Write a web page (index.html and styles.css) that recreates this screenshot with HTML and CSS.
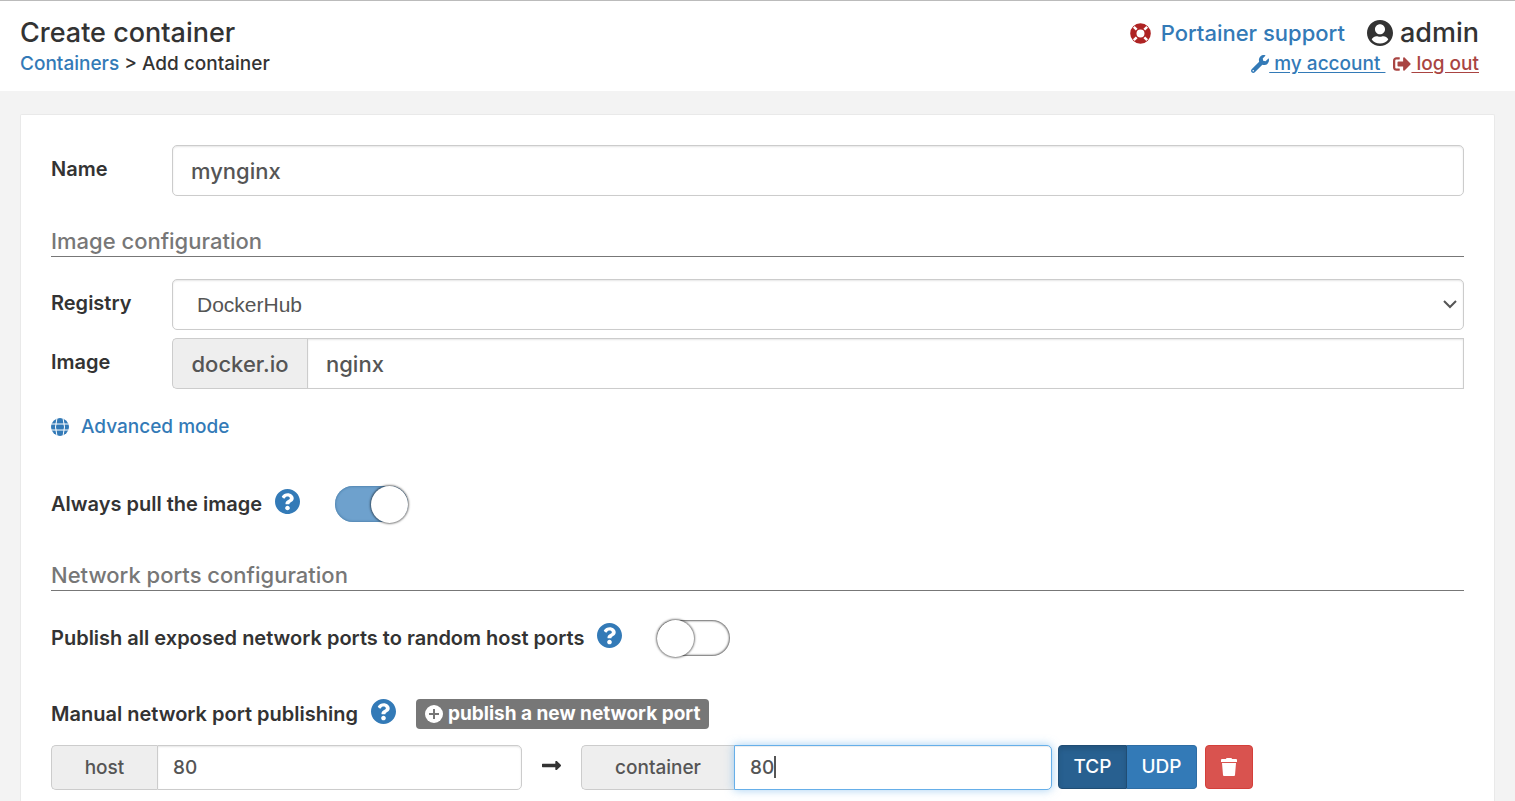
FILE: index.html
```html
<!DOCTYPE html>
<html lang="en">

<head>
    <meta charset="UTF-8">
    <meta name="viewport" content="width=device-width, initial-scale=1.0">
    <title>Create container</title>
    <link rel="stylesheet" href="styles.css">
</head>

<body>
    <!-- shared icons -->
    <svg class="sprite" aria-hidden="true">
        <symbol id="question" viewBox="8 8 496 496">
            <path d="M504 256c0 136.997-111.043 248-248 248S8 392.997 8 256C8 119.083 119.043 8 256 8s248 111.083 248 248zM262.655 90c-54.497 0-89.255 22.957-116.549 63.758-3.536 5.286-2.353 12.415 2.715 16.258l34.699 26.31c5.205 3.947 12.621 3.008 16.665-2.122 17.864-22.658 30.113-35.797 57.303-35.797 20.429 0 45.698 13.148 45.698 32.958 0 14.976-12.363 22.667-32.534 33.976C247.128 238.528 216 254.941 216 296v4c0 6.627 5.373 12 12 12h56c6.627 0 12-5.373 12-12v-1.333c0-28.462 83.186-29.647 83.186-106.667 0-58.002-60.165-102-116.531-102zM256 338c-25.365 0-46 20.635-46 46 0 25.364 20.635 46 46 46s46-20.636 46-46c0-25.365-20.635-46-46-46z"/>
        </symbol>
    </svg>

    <header class="header">
        <div>
            <h1 class="title">Create container</h1>
            <nav class="crumbs"><a href="#">Containers</a> &gt; Add container</nav>
        </div>
        <div class="user">
            <div class="user-top">
                <a href="#" class="support">
                    <svg class="ico-ring" viewBox="0 0 22 22" aria-hidden="true">
                        <circle cx="11" cy="11" r="7.500" fill="none" stroke="#ae2323" stroke-width="6.600"/>
                        <path d="M4 4l3 3M18 4l-3 3M4 18l3-3M18 18l-3-3" stroke="#fff" stroke-width="2.600"/>
                    </svg>
                    Portainer support
                </a>
                <span class="username">
                    <svg class="ico-user" viewBox="0 8 496 496" aria-hidden="true">
                        <path d="M248 8C111 8 0 119 0 256s111 248 248 248 248-111 248-248S385 8 248 8zm0 80c53 0 96 43 96 96s-43 96-96 96-96-43-96-96 43-96 96-96zm0 368c-66 0-123-30-158-78 12-38 50-62 94-62 20 0 34 10 64 10s44-10 64-10c44 0 82 24 94 62-35 48-92 78-158 78z"/>
                    </svg>
                    admin
                </span>
            </div>
            <div class="user-links">
                <a href="#"><svg class="ico-link" viewBox="0 0 512 512" aria-hidden="true"><path d="M507.730 109.100c-2.240-9.030-13.540-12.090-20.120-5.510l-74.360 74.360-67.880-11.310-11.310-67.880 74.360-74.360c6.620-6.620 3.430-17.900-5.660-20.160-47.380-11.740-99.550.910-136.580 37.930-39.640 39.640-50.550 97.100-34.050 147.200L18.740 402.760c-24.990 24.990-24.990 65.510 0 90.500 24.990 24.990 65.510 24.990 90.500 0l213.210-213.210c50.120 16.710 107.470 5.680 147.370-34.220 37.070-37.070 49.700-89.320 37.910-136.730zM64 472c-13.250 0-24-10.750-24-24s10.750-24 24-24 24 10.750 24 24-10.750 24-24 24z"/></svg><u>&nbsp;my account&nbsp;</u></a>
                <a href="#" class="logout"><svg class="ico-link" viewBox="0 0 512 512" aria-hidden="true"><path d="M497 273L329 441c-15 15-41 4.500-41-17v-96H152c-13.300 0-24-10.700-24-24v-96c0-13.300 10.700-24 24-24h136V88c0-21.400 25.900-32 41-17l168 168c9.300 9.400 9.300 24.600 0 34zM192 436v-40c0-6.600-5.400-12-12-12H96c-17.700 0-32-14.300-32-32V160c0-17.700 14.300-32 32-32h84c6.600 0 12-5.400 12-12V76c0-6.600-5.400-12-12-12H96c-53 0-96 43-96 96v192c0 53 43 96 96 96h84c6.600 0 12-5.400 12-12z"/></svg><u>&nbsp;log out</u></a>
            </div>
        </div>
    </header>

    <main class="panel">
        <form>
            <div class="row name-row">
                <label for="name">Name</label>
                <input type="text" id="name" class="field" value="mynginx">
            </div>

            <h2 class="section">Image configuration</h2>
            <div class="row">
                <label for="registry">Registry</label>
                <div class="select">
                    <select id="registry" class="field">
                        <option>DockerHub</option>
                    </select>
                    <svg viewBox="0 0 14 9" aria-hidden="true"><path d="M1 1l6 6 6-6"/></svg>
                </div>
            </div>
            <div class="row">
                <label for="image">Image</label>
                <div class="group image-group">
                    <span class="addon">docker.io</span>
                    <input type="text" id="image" class="field" value="nginx">
                </div>
            </div>
            <a href="#" class="advanced">
                <svg viewBox="0 0 18 18" aria-hidden="true">
                    <circle cx="9" cy="9" r="9"/>
                    <path d="M0 6h18M0 12h18M6 0q-3 9 0 18M12 0q3 9 0 18"/>
                </svg>
                Advanced mode
            </a>

            <div class="option">
                <label for="pull">Always pull the image</label>
                <svg class="help"><use href="#question"/></svg>
                <input type="checkbox" id="pull" class="switch" checked>
            </div>

            <h2 class="section">Network ports configuration</h2>
            <div class="option">
                <label for="publish">Publish all exposed network ports to random host ports</label>
                <svg class="help"><use href="#question"/></svg>
                <input type="checkbox" id="publish" class="switch">
            </div>

            <div class="manual">
                <span class="manual-label">Manual network port publishing</span>
                <svg class="help"><use href="#question"/></svg>
                <button type="button" class="badge">
                    <svg viewBox="0 0 18 18" aria-hidden="true">
                        <circle cx="9" cy="9" r="9" fill="#fff"/>
                        <path d="M9 4v10M4 9h10" stroke="#777" stroke-width="2"/>
                    </svg>
                    publish a new network port
                </button>
            </div>

            <!-- port mapping -->
            <div class="ports">
                <div class="group port">
                    <label class="addon host" for="host">host</label>
                    <input type="text" id="host" class="field" value="80">
                </div>
                <div class="arrow">
                    <svg viewBox="0 150 448 212" aria-hidden="true"><path d="M313.941 216H12c-6.627 0-12 5.373-12 12v56c0 6.627 5.373 12 12 12h301.941v46.059c0 21.382 25.851 32.090 40.971 16.971l86.059-86.059c9.373-9.373 9.373-24.569 0-33.941l-86.059-86.059c-15.119-15.119-40.971-4.411-40.971 16.971V216z"/></svg>
                </div>
                <div class="group port">
                    <label class="addon container" for="container">container</label>
                    <input type="text" id="container" class="field active" value="80">
                    <span class="caret"></span>
                </div>
                <div class="proto">
                    <button type="button" class="btn on">TCP</button>
                    <button type="button" class="btn">UDP</button>
                </div>
                <button type="button" class="remove" aria-label="Remove port">
                    <svg viewBox="0 0 16 18" aria-hidden="true"><path d="M5 1q0-1 1-1h4q1 0 1 1h4q1 0 1 1v2H0V2q0-1 1-1zM1 5h14l-1 12q0 1-1 1H3q-1 0-1-1z"/></svg>
                </button>
            </div>
        </form>
    </main>
</body>

</html>
```

FILE: styles.css
```css
* {
    box-sizing: border-box;
}

body {
    display: flex;
    flex-direction: column;
    min-height: 100vh;
    margin: 0;
    background: #f3f3f3;
    border-top: 1px solid #bbb;
    color: #333;
    font: 500 19px/26px Inter, "Open Sans", sans-serif;
}

a {
    color: #337ab7;
    text-decoration: none;
}

input,
select,
button {
    margin: 0;
    font: inherit;
}

.sprite {
    position: absolute;
    width: 0;
    height: 0;
}

/* header */
.header {
    display: flex;
    justify-content: space-between;
    height: 90px;
    padding: 16px 36px 0 20px;
    background: #fff;
}

.title {
    margin: 0;
    font-size: 27px;
    font-weight: 500;
    line-height: 32px;
}

.crumbs {
    line-height: 30px;
}

.user-top,
.user-links {
    display: flex;
    justify-content: flex-end;
    align-items: center;
}

.user-top {
    gap: 22px;
    height: 32px;
}

.support,
.username {
    display: flex;
    align-items: center;
}

.support {
    gap: 10px;
    font-size: 22px;
}

.username {
    gap: 7px;
    font-size: 27px;
}

.ico-ring {
    width: 21px;
    height: 21px;
}

.ico-user {
    width: 26px;
    height: 26px;
    fill: #333;
}

.user-links {
    gap: 8px;
    line-height: 30px;
}

.user-links a {
    display: flex;
    align-items: center;
}

.user-links u {
    text-underline-offset: 2px;
}

.user-links .logout {
    color: #a94442;
}

.ico-link {
    width: 18px;
    height: 18px;
    fill: currentColor;
}

/* form panel */
.panel {
    flex: 1;
    margin: 23px 20px 0;
    padding: 30px;
    padding-bottom: 10px;
    background: #fff;
    border: 1px solid #e9e9e9;
    border-bottom: 0;
    border-radius: 2px 2px 0 0;
}

.row {
    display: grid;
    grid-template-columns: 121px 1fr;
    margin-bottom: 8px;
}

.row > label {
    padding-top: 11px;
    font-size: 20px;
    font-weight: 600;
}

.name-row {
    margin-bottom: 31px;
}

.field {
    width: 100%;
    min-width: 0;
    height: 51px;
    padding: 0 18px;
    background: #fff;
    border: 1px solid #ccc;
    border-radius: 5px;
    box-shadow: inset 0 1px 2px rgba(0, 0, 0, .1);
    color: #555;
    font-size: 22px;
    outline: 0;
}

.section {
    margin: 0 0 22px;
    padding-bottom: 1px;
    border-bottom: 1px solid #777;
    color: #777;
    font-size: 22px;
    font-weight: 500;
    line-height: 28px;
}

.section + .option {
    margin-top: 28px;
}

.select {
    position: relative;
}

.select .field {
    padding-left: 24px;
    appearance: none;
    font-family: "Liberation Sans", Arial, sans-serif;
    font-size: 21px;
    font-weight: 400;
}

/* chevron over the select */
.select svg {
    position: absolute;
    top: 21px;
    right: 7px;
    width: 14px;
    height: 9px;
    fill: none;
    stroke: #555;
    stroke-width: 2;
    pointer-events: none;
}

.group {
    display: flex;
}

.group .field {
    flex: 1;
    border-radius: 0 5px 5px 0;
}

.image-group .field {
    border-radius: 0;
}

.addon {
    display: flex;
    flex: none;
    align-items: center;
    justify-content: center;
    width: 135px;
    background: #eee;
    border: 1px solid #ccc;
    border-right: 0;
    border-radius: 5px 0 0 5px;
    color: #555;
    font-size: 22px;
}

.advanced {
    display: inline-flex;
    align-items: center;
    gap: 12px;
    margin: 17px 0 45px;
}

.advanced svg {
    width: 18px;
    height: 18px;
    fill: #337ab7;
}

.advanced path {
    fill: none;
    stroke: #fff;
    stroke-width: 1;
}

.option {
    display: flex;
    align-items: center;
    height: 38px;
    margin-bottom: 38px;
    font-size: 20px;
    font-weight: 600;
}

.help {
    width: 25px;
    height: 25px;
    margin: 0 0 6px 13px;
    fill: #337ab7;
}

/* toggles */
.switch {
    display: flex;
    align-items: center;
    width: 73px;
    height: 36px;
    margin-left: 35px;
    appearance: none;
    background: #fff;
    border-radius: 18px;
    box-shadow: inset 0 0 2px 1px rgba(0, 0, 0, .6);
}

.switch::before {
    content: "";
    width: 37px;
    height: 37px;
    flex: none;
    background: #fff;
    border-radius: 50%;
    box-shadow: 0 0 2px 1px rgba(0, 0, 0, .5);
}

.switch:checked {
    justify-content: flex-end;
    background: #6ea1cd;
    box-shadow: inset 0 0 2px 1px #5588b3;
}

.manual {
    display: flex;
    align-items: center;
    height: 30px;
    margin: 42px 0 16px;
    font-size: 20px;
    font-weight: 600;
}

.badge {
    display: flex;
    align-items: center;
    gap: 5px;
    height: 30px;
    margin: 0 0 0 20px;
    padding: 0 9px;
    background: #777;
    border: 0;
    border-radius: 4px;
    color: #fff;
    font-size: 19px;
    font-weight: 700;
    white-space: nowrap;
}

.badge svg {
    width: 18px;
    height: 18px;
}

/* port mapping */
.ports {
    display: flex;
}

.port {
    position: relative;
    width: calc(100% / 3);
}

.port .field {
    height: 45px;
    padding: 0 15px;
    font-size: 19px;
}

.port .addon {
    font-size: 19px;
}

.port .host {
    width: 106px;
}

.port .container {
    width: 153px;
}

.port .active {
    border-color: #66afe9;
    box-shadow: inset 0 1px 1px rgba(0, 0, 0, .075), 0 0 10px rgba(102, 175, 233, .6);
}

/* text cursor */
.caret {
    position: absolute;
    top: 11px;
    left: 193px;
    width: 2px;
    height: 22px;
    background: #555;
}

.arrow {
    width: 59px;
    padding-top: 14px;
    text-align: center;
    line-height: 9px;
}

.arrow svg {
    width: 19px;
    height: 9px;
    fill: #333;
}

.proto {
    display: flex;
    height: 44px;
    margin: 0 8px 0 6px;
}

.btn {
    width: 70px;
    padding: 0;
    background: #337ab7;
    border: 1px solid #2e6da4;
    border-left: 0;
    border-radius: 0 4px 4px 0;
    color: #fff;
}

.btn.on {
    width: 69px;
    background: #286090;
    border: 1px solid #204d74;
    border-radius: 4px 0 0 4px;
    box-shadow: inset 0 3px 5px rgba(0, 0, 0, .125);
}

.remove {
    display: flex;
    align-items: center;
    justify-content: center;
    width: 48px;
    height: 44px;
    padding: 0;
    background: #d9534f;
    border: 1px solid #d43f3a;
    border-radius: 4px;
}

.remove svg {
    width: 16px;
    height: 18px;
    fill: #fff;
}
```
